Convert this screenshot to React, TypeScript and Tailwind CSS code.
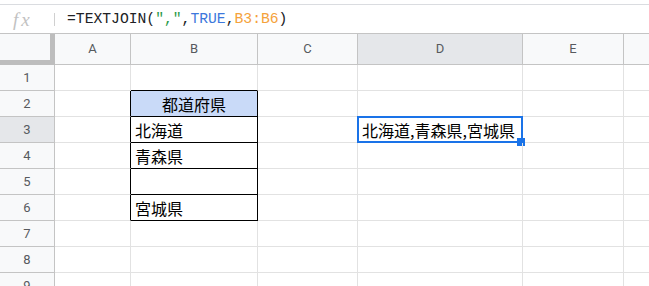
import React from "react";

const widths = [76, 127, 100, 165, 101, 40];
const letters = ["A", "B", "C", "D", "E", ""];

const cjk = "font-['Noto_Sans_CJK_JP','Noto_Sans',sans-serif]";

function HeaderCell({ w, label, active }: { w: number; label: string; active?: boolean }) {
  return (
    <div
      style={{ width: w }}
      className={
        "flex h-[31px] shrink-0 items-center justify-center border-r border-b border-[#c4c4c4] text-[13px] text-[#575a5e] " +
        (active ? "bg-[#e5e7ea]" : "bg-[#f8f9fa]")
      }
    >
      {label}
    </div>
  );
}

export default function App() {
  const rows = [1, 2, 3, 4, 5, 6, 7, 8, 9];
  const bData: Record<number, string> = { 2: "都道府県", 3: "北海道", 4: "青森県", 6: "宮城県" };

  return (
    <div className="h-[286px] w-[649px] overflow-hidden bg-white font-['Roboto',sans-serif]">
      {/* toolbar edge */}
      <div className="h-[5px] border-b border-[#dadce0]" />

      {/* formula bar */}
      <div className="flex h-[29px] items-center border-b border-[#c4c4c4]">
        <div className="flex w-[54px] items-center">
          <span className="ml-[13px] font-['Liberation_Serif',serif] text-[19px] italic leading-none tracking-[3px] text-[#c2c2c2]">
            fx
          </span>
        </div>
        <div className="h-[13px] w-px bg-[#d0d0d0]" />
        <div className="ml-[12px] font-['Liberation_Mono',monospace] text-[14.7px] text-[#202124]">
          =TEXTJOIN(<span className="text-[#2b9a48]">","</span>,<span className="text-[#3d78dc]">TRUE</span>,
          <span className="text-[#f5a23b]">B3:B6</span>)
        </div>
      </div>

      {/* column headers */}
      <div className="flex">
        <div className="h-[31px] w-[55px] shrink-0 border-r-[5px] border-b-[5px] border-[#bdbdbd] bg-[#f8f9fa]" />
        {widths.map((w, i) => (
          <HeaderCell key={i} w={w} label={letters[i]} active={i === 3} />
        ))}
      </div>

      {/* rows */}
      {rows.map((r) => {
        const inTable = r >= 2 && r <= 6;
        return (
          <div key={r} className="flex">
            <div
              className={
                "flex h-[26px] w-[55px] shrink-0 items-center justify-center border-r border-b border-[#c4c4c4] text-[13px] text-[#575a5e] " +
                (r === 3 ? "bg-[#e5e7ea]" : "bg-[#f8f9fa]")
              }
            >
              {r}
            </div>
            {/* A */}
            <div
              className={
                "h-[26px] w-[76px] shrink-0 border-b border-r border-b-[#e2e2e2] " +
                (inTable ? "border-r-black" : "border-r-[#e2e2e2]")
              }
            />
            {/* B */}
            <div
              className={
                "flex h-[26px] w-[127px] shrink-0 items-center border-r border-b pt-[1px] text-[16px] text-black " +
                cjk +
                " " +
                (inTable ? "border-r-black " : "border-r-[#e2e2e2] ") +
                (r >= 1 && r <= 6 ? "border-b-black " : "border-b-[#e2e2e2] ") +
                (r === 2 ? "justify-center bg-[#c9daf8]" : "pl-[4px]")
              }
            >
              {bData[r] ?? ""}
            </div>
            {/* C */}
            <div className="h-[26px] w-[100px] shrink-0 border-r border-b border-[#e2e2e2]" />
            {/* D */}
            <div className="relative flex h-[26px] w-[165px] shrink-0 items-center border-r border-b border-[#e2e2e2]">
              {r === 3 && (
                <>
                  <span className={"whitespace-nowrap pt-[1px] pl-[4px] text-[16px] text-black " + cjk}>
                    北海道,青森県,宮城県
                  </span>
                  <div className="absolute top-[-1px] left-[-1px] h-[27px] w-[166px] border-2 border-[#1a73e8]" />
                  <div className="absolute top-[21px] left-[159px] h-[8px] w-[8px] bg-[#1a73e8]" />
                </>
              )}
            </div>
            {/* E */}
            <div className="h-[26px] w-[101px] shrink-0 border-r border-b border-[#e2e2e2]" />
            <div className="h-[26px] w-[40px] shrink-0 border-b border-[#e2e2e2]" />
          </div>
        );
      })}
    </div>
  );
}
